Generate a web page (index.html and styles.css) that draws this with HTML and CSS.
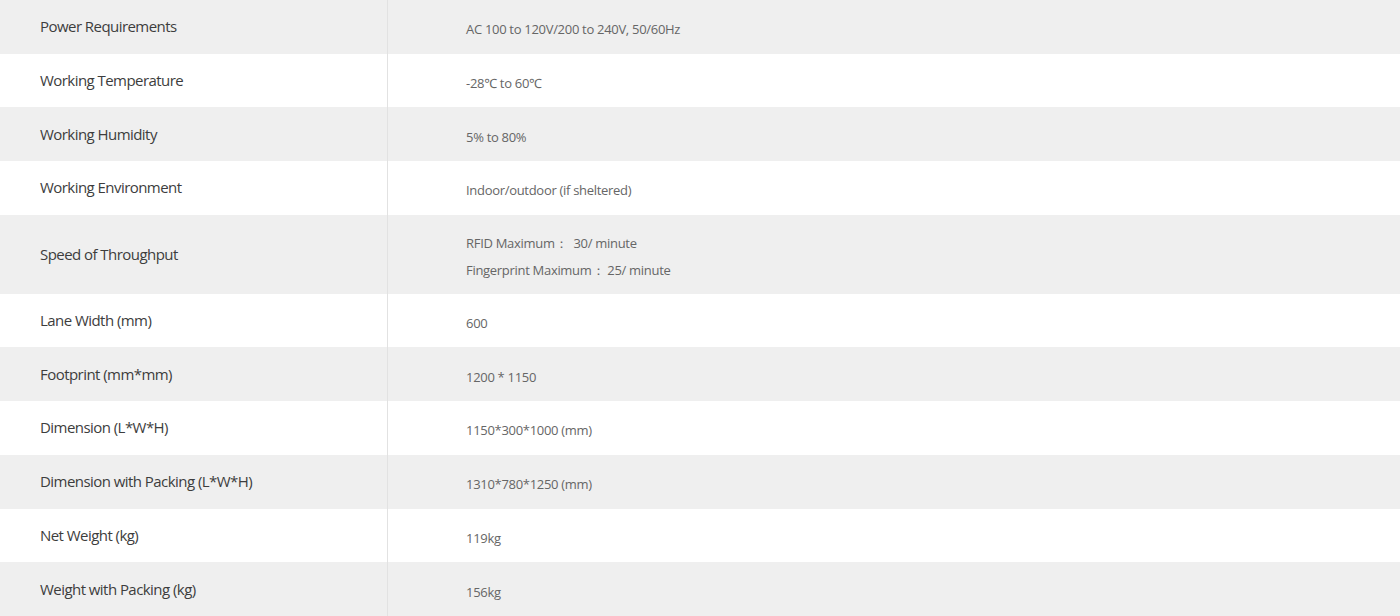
FILE: index.html
```html
<!DOCTYPE html>
<html>
<head>
<meta charset="utf-8">
<link rel="stylesheet" href="styles.css">
</head>
<body>
<div class="specs">
  <div class="row grey"><div class="label">Power Requirements</div><div class="value">AC 100 to 120V/200 to 240V, 50/60Hz</div></div>
  <div class="row"><div class="label">Working Temperature</div><div class="value">-28℃ to 60℃</div></div>
  <div class="row grey"><div class="label">Working Humidity</div><div class="value">5% to 80%</div></div>
  <div class="row"><div class="label">Working Environment</div><div class="value">Indoor/outdoor (if sheltered)</div></div>
  <div class="row grey tall"><div class="label">Speed of Throughput</div><div class="value multi"><span>RFID Maximum：&nbsp;&nbsp;30/ minute</span><span>Fingerprint Maximum：&nbsp;25/ minute</span></div></div>
  <div class="row"><div class="label">Lane Width (mm)</div><div class="value">600</div></div>
  <div class="row grey"><div class="label">Footprint (mm*mm)</div><div class="value">1200 * 1150</div></div>
  <div class="row"><div class="label">Dimension (L*W*H)</div><div class="value">1150*300*1000 (mm)</div></div>
  <div class="row grey"><div class="label">Dimension with Packing (L*W*H)</div><div class="value">1310*780*1250 (mm)</div></div>
  <div class="row"><div class="label">Net Weight (kg)</div><div class="value">119kg</div></div>
  <div class="row grey"><div class="label">Weight with Packing (kg)</div><div class="value">156kg</div></div>
</div>
</body>
</html>
```
FILE: styles.css
```css
html, body {
  margin: 0;
  padding: 0;
  background: #fff;
}
body {
  font-family: "Open Sans", "Noto Sans", sans-serif;
}
.specs {
  display: flex;
  flex-direction: column;
}
.row {
  display: grid;
  grid-template-columns: 388px 1fr;
  height: 53.7px;
  background: #fff;
}
.row.grey {
  background: #efefef;
}
.row.tall {
  height: 79px;
}
.label {
  display: flex;
  align-items: center;
  padding-left: 40px;
  padding-bottom: 1px;
  font-size: 15px;
  letter-spacing: -0.55px;
  color: #3d3d3d;
  border-right: 1px solid #e2e2e2;
}
.value {
  display: flex;
  align-items: center;
  padding-left: 78px;
  padding-top: 5px;
  font-size: 13px;
  letter-spacing: -0.3px;
  color: #666;
}
.value.multi {
  flex-direction: column;
  align-items: flex-start;
  justify-content: center;
  line-height: 27px;
  padding-top: 6px;
}
```
